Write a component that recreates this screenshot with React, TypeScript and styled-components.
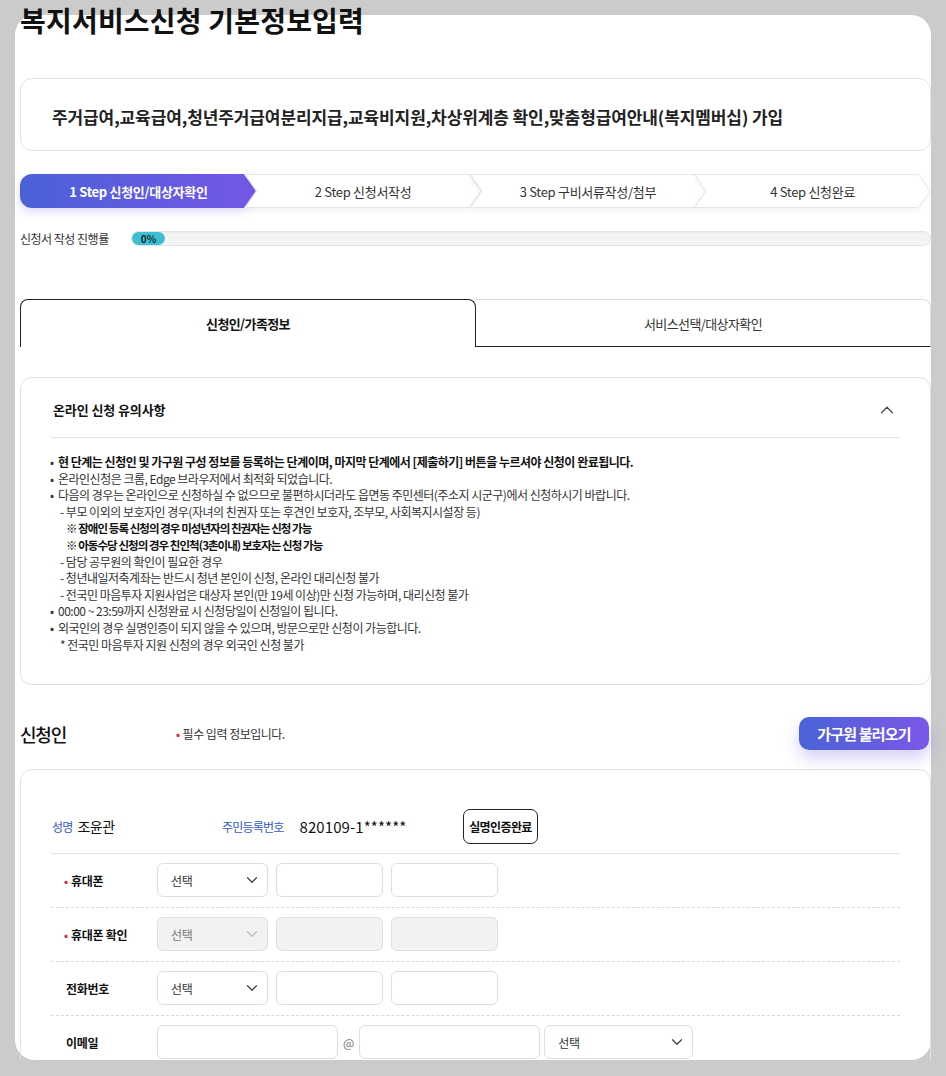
import React from 'react';
import styled, { createGlobalStyle } from 'styled-components';
import { ChevronDown, ChevronUp } from 'lucide-react';

const FONT = `"Noto Sans CJK KR", "Noto Sans", "DejaVu Sans", sans-serif`;

const Global = createGlobalStyle`
  html, body { margin: 0; padding: 0; overflow: hidden; background: #cbcbcb; }
  body { font-family: ${FONT}; color: #222; }
  *, *::before, *::after { box-sizing: border-box; }
  button, input { font-family: ${FONT}; }
`;

const Panel = styled.div`
  display: flow-root;
  margin: 15px 0 0 15px;
  width: 916px;
  height: 1045px;
  background: #fff;
  border-radius: 20px;
`;

const Content = styled.main`
  margin: -15px 0 0 5px;
  width: 911px;
`;

const PageTitle = styled.h1`
  margin: 0;
  font-size: 28px;
  font-weight: 700;
  line-height: 40px;
  letter-spacing: 0.2px;
  color: #111;
`;

const ServiceBox = styled.div`
  margin-top: 38px;
  height: 73px;
  border: 1px solid #e3e3e3;
  border-radius: 12px;
  display: flex;
  align-items: center;
  padding: 3px 0 0 31px;
  font-size: 17px;
  font-weight: 700;
  letter-spacing: -0.1px;
  color: #222;
`;

const Steps = styled.ol`
  margin: 23px 0 0;
  padding: 0 12px 0 0;
  list-style: none;
  display: grid;
  grid-template-columns: repeat(4, 1fr);
  height: 34px;
`;

const Step = styled.li<{ $active?: boolean }>`
  position: relative;
  display: flex;
  align-items: center;
  justify-content: center;
  padding-left: 12px;
  font-size: 13px;
  font-weight: ${(p) => (p.$active ? 700 : 400)};
  color: ${(p) => (p.$active ? '#fff' : '#333')};
  letter-spacing: -0.3px;
`;

const StepShape = styled.svg<{ $active?: boolean }>`
  position: absolute;
  left: 0;
  top: 0;
  width: calc(100% + 12px);
  height: 100%;
  overflow: visible;
  filter: ${(p) =>
    p.$active
      ? 'drop-shadow(0 4px 5px rgba(100, 90, 230, 0.22))'
      : 'drop-shadow(0 2px 3px rgba(0, 0, 0, 0.05))'};
`;

const StepLabel = styled.span`
  position: relative;
`;

const ProgressRow = styled.div`
  margin-top: 23px;
  display: flex;
  align-items: center;
  height: 15px;
`;

const ProgressLabel = styled.span`
  width: 111px;
  font-size: 12px;
  letter-spacing: -0.5px;
  color: #333;
`;

const Track = styled.div`
  flex: 1;
  height: 15px;
  border-radius: 8px;
  background: #f4f4f4;
  border: 1px solid #e4e4e4;
  box-shadow: inset 0 1px 2px rgba(0, 0, 0, 0.04);
  display: flex;
  align-items: center;
`;

const Fill = styled.div`
  height: 13px;
  min-width: 33px;
  background: #3dbfd0;
  border-radius: 8px;
  font-size: 10px;
  font-weight: 700;
  line-height: 13px;
  color: #1b2a30;
  text-align: center;
`;

const Tabs = styled.div`
  margin-top: 53px;
  display: grid;
  grid-template-columns: 456px 1fr;
  height: 48px;
`;

const Tab = styled.button<{ $active?: boolean }>`
  height: 48px;
  background: #fff;
  font-size: 13px;
  letter-spacing: -0.6px;
  cursor: pointer;
  padding: 0;
  font-weight: ${(p) => (p.$active ? 700 : 400)};
  color: ${(p) => (p.$active ? '#111' : '#333')};
  border: 1px solid ${(p) => (p.$active ? '#222' : '#dedede')};
  border-bottom: ${(p) => (p.$active ? 'none' : '1px solid #222')};
  border-left: ${(p) => (p.$active ? '1px solid #222' : 'none')};
  border-radius: ${(p) => (p.$active ? '8px 8px 0 0' : '0 8px 0 0')};
`;

const NoticeCard = styled.section`
  margin-top: 30px;
  border: 1px solid #e0e0e0;
  border-radius: 12px;
  padding: 0 30px 31px;
`;

const NoticeHead = styled.div`
  height: 60px;
  display: flex;
  align-items: center;
  justify-content: space-between;
  padding: 4px 2px 0;
  border-bottom: 1px solid #e3e3e3;
  color: #444;
`;

const NoticeTitle = styled.h3`
  margin: 0;
  font-size: 13px;
  font-weight: 700;
  letter-spacing: -0.1px;
  color: #111;
`;

const NoticeList = styled.ul`
  margin: 0;
  padding: 16px 0 0;
  list-style: none;
`;

type LineKind = 'bullet' | 'dash' | 'note' | 'star';

const NoticeLine = styled.li<{ $kind: LineKind; $strong?: boolean }>`
  position: relative;
  font-size: ${(p) => (p.$kind === 'note' ? '11.5px' : '12px')};
  line-height: 16.6px;
  letter-spacing: ${(p) => (p.$kind === 'note' ? '-0.95px' : '-0.5px')};
  white-space: nowrap;
  font-weight: ${(p) => (p.$strong ? 700 : 400)};
  color: ${(p) => (p.$strong ? '#111' : '#333')};
  padding-left: ${(p) =>
    p.$kind === 'bullet' ? '7px' : p.$kind === 'note' ? '15px' : '9px'};
  &::before {
    content: ${(p) => (p.$kind === 'bullet' ? "'•'" : "''")};
    position: absolute;
    left: -1px;
    top: 0;
    font-weight: 400;
    color: #333;
  }
`;

const SectionHead = styled.div`
  margin-top: 32px;
  display: flex;
  align-items: center;
  height: 33px;
`;

const SectionTitle = styled.h2`
  margin: 0;
  width: 156px;
  font-size: 18px;
  font-weight: 500;
  letter-spacing: -1.2px;
  color: #111;
`;

const RequiredNote = styled.span`
  flex: 1;
  font-size: 12px;
  letter-spacing: -0.5px;
  color: #333;
`;

const Dot = styled.span`
  color: #d3263c;
  margin-right: 3px;
`;

const LabelDot = styled.span`
  position: absolute;
  left: -7px;
  top: 0;
  color: #d3263c;
  font-weight: 400;
`;

const LoadButton = styled.button`
  width: 130px;
  height: 33px;
  margin-right: 2px;
  border: none;
  border-radius: 10px;
  background: linear-gradient(90deg, #4a63d8 0%, #7a58e8 100%);
  box-shadow: 0 8px 16px rgba(100, 90, 230, 0.28);
  color: #fff;
  font-size: 15px;
  font-weight: 700;
  letter-spacing: -0.8px;
  cursor: pointer;
`;

const FormCard = styled.section`
  margin-top: 19px;
  border: 1px solid #e2e2e2;
  border-radius: 12px;
  padding: 39px 30px 60px;
`;

const IdentityRow = styled.div`
  display: flex;
  align-items: center;
  height: 45px;
  padding-bottom: 10px;
  border-bottom: 1px solid #e3e3e3;
`;

const IdentityField = styled.div<{ $width: number }>`
  width: ${(p) => p.$width}px;
  display: flex;
  align-items: center;
  gap: 5px;
  padding-left: 1px;
`;

const BlueLabel = styled.span`
  font-size: 12px;
  letter-spacing: -0.8px;
  color: #2f58c2;
`;

const PlainValue = styled.span<{ $size: number }>`
  font-size: ${(p) => p.$size}px;
  letter-spacing: ${(p) => (p.$size > 14 ? '0.1px' : '-0.5px')};
  color: #111;
  margin-left: ${(p) => (p.$size > 14 ? '11px' : '0')};
`;

const VerifiedButton = styled.button`
  width: 75px;
  height: 35px;
  background: #fff;
  border: 1px solid #222;
  border-radius: 7px;
  font-size: 12px;
  font-weight: 700;
  letter-spacing: -0.6px;
  color: #111;
  padding: 0;
`;

const FieldRow = styled.div`
  display: flex;
  align-items: center;
  padding: 9px 0 10px;
  border-bottom: 1px dashed #d9d9d9;
`;

const FieldLabel = styled.label<{ $required?: boolean }>`
  width: 106px;
  display: flex;
  padding-left: ${(p) => (p.$required ? '20px' : '15px')};
`;

const LabelText = styled.span`
  position: relative;
  font-size: 12px;
  font-weight: 700;
  letter-spacing: -0.3px;
  color: #111;
`;

const Controls = styled.div<{ $gap?: number }>`
  display: flex;
  align-items: center;
  gap: ${(p) => p.$gap ?? 8}px;
`;

const SelectBox = styled.button<{ $width: number; $disabled?: boolean }>`
  width: ${(p) => p.$width}px;
  height: 34px;
  display: flex;
  align-items: center;
  justify-content: space-between;
  padding: 0 6px 0 13px;
  border: 1px solid #dedede;
  border-radius: 6px;
  background: ${(p) => (p.$disabled ? '#f2f2f2' : '#fff')};
  color: ${(p) => (p.$disabled ? '#777' : '#333')};
  font-size: 12px;
  letter-spacing: -0.4px;
  svg {
    color: ${(p) => (p.$disabled ? '#bdbdbd' : '#444')};
  }
`;

const TextInput = styled.input<{ $width: number }>`
  width: ${(p) => p.$width}px;
  height: 34px;
  border: 1px solid #dedede;
  border-radius: 6px;
  background: #fff;
  padding: 0 10px;
  font-size: 12px;
  &:disabled {
    background: #f2f2f2;
  }
`;

const AtSign = styled.span`
  margin: 0 1px;
  font-size: 12px;
  color: #777;
`;

const stepList = [
  '1 Step 신청인/대상자확인',
  '2 Step 신청서작성',
  '3 Step 구비서류작성/첨부',
  '4 Step 신청완료',
];

const noticeLines: { kind: LineKind; strong?: boolean; text: string }[] = [
  {
    kind: 'bullet',
    strong: true,
    text: '현 단계는 신청인 및 가구원 구성 정보를 등록하는 단계이며, 마지막 단계에서 [제출하기] 버튼을 누르셔야 신청이 완료됩니다.',
  },
  { kind: 'bullet', text: '온라인신청은 크롬, Edge 브라우저에서 최적화 되었습니다.' },
  {
    kind: 'bullet',
    text: '다음의 경우는 온라인으로 신청하실 수 없으므로 불편하시더라도 읍면동 주민센터(주소지 시군구)에서 신청하시기 바랍니다.',
  },
  { kind: 'dash', text: '- 부모 이외의 보호자인 경우(자녀의 친권자 또는 후견인 보호자, 조부모, 사회복지시설장 등)' },
  { kind: 'note', strong: true, text: '※ 장애인 등록 신청의 경우 미성년자의 친권자는 신청 가능' },
  { kind: 'note', strong: true, text: '※ 아동수당 신청의 경우 친인척(3촌이내) 보호자는 신청 가능' },
  { kind: 'dash', text: '- 담당 공무원의 확인이 필요한 경우' },
  { kind: 'dash', text: '- 청년내일저축계좌는 반드시 청년 본인이 신청, 온라인 대리신청 불가' },
  { kind: 'dash', text: '- 전국민 마음투자 지원사업은 대상자 본인(만 19세 이상)만 신청 가능하며, 대리신청 불가' },
  { kind: 'bullet', text: '00:00 ~ 23:59까지 신청완료 시 신청당일이 신청일이 됩니다.' },
  { kind: 'bullet', text: '외국인의 경우 실명인증이 되지 않을 수 있으며, 방문으로만 신청이 가능합니다.' },
  { kind: 'star', text: '* 전국민 마음투자 지원 신청의 경우 외국인 신청 불가' },
];

function Select({ width, disabled }: { width: number; disabled?: boolean }) {
  return (
    <SelectBox type="button" $width={width} $disabled={disabled}>
      <span>선택</span>
      <ChevronDown size={18} strokeWidth={1.7} />
    </SelectBox>
  );
}

function Label({ text, required }: { text: string; required?: boolean }) {
  return (
    <FieldLabel $required={required}>
      <LabelText>
        {required && <LabelDot>•</LabelDot>}
        {text}
      </LabelText>
    </FieldLabel>
  );
}

function StepItem({ label, index }: { label: string; index: number }) {
  const active = index === 0;
  return (
    <Step $active={active}>
      <StepShape $active={active} viewBox="0 0 237 34" preserveAspectRatio="none">
        {active ? (
          <>
            <defs>
              <linearGradient id="stepGrad" x1="0" y1="0" x2="1" y2="0">
                <stop offset="0" stopColor="#4b61d8" />
                <stop offset="1" stopColor="#7457e6" />
              </linearGradient>
            </defs>
            <path
              d="M12 0 H224 L236 17 L224 34 H12 A12 12 0 0 1 0 22 V12 A12 12 0 0 1 12 0 Z"
              fill="url(#stepGrad)"
            />
          </>
        ) : (
          <path
            d="M0.5 0.5 H224.5 L236.3 17 L224.5 33.5 H0.5 L12 17 Z"
            fill="#fff"
            stroke="#e6e6e6"
            strokeWidth={1}
            vectorEffect="non-scaling-stroke"
          />
        )}
      </StepShape>
      <StepLabel>{label}</StepLabel>
    </Step>
  );
}

export default function App() {
  return (
    <>
      <Global />
      <Panel>
        <Content>
          <PageTitle>복지서비스신청 기본정보입력</PageTitle>

          <ServiceBox>
            주거급여,교육급여,청년주거급여분리지급,교육비지원,차상위계층 확인,맞춤형급여안내(복지멤버십) 가입
          </ServiceBox>

          <Steps>
            {stepList.map((s, i) => (
              <StepItem key={s} label={s} index={i} />
            ))}
          </Steps>

          <ProgressRow>
            <ProgressLabel>신청서 작성 진행률</ProgressLabel>
            <Track>
              <Fill>0%</Fill>
            </Track>
          </ProgressRow>

          <Tabs>
            <Tab $active type="button">신청인/가족정보</Tab>
            <Tab type="button">서비스선택/대상자확인</Tab>
          </Tabs>

          <NoticeCard>
            <NoticeHead>
              <NoticeTitle>온라인 신청 유의사항</NoticeTitle>
              <ChevronUp size={22} strokeWidth={1.3} />
            </NoticeHead>
            <NoticeList>
              {noticeLines.map((l, i) => (
                <NoticeLine key={i} $kind={l.kind} $strong={l.strong}>
                  {l.text}
                </NoticeLine>
              ))}
            </NoticeList>
          </NoticeCard>

          <SectionHead>
            <SectionTitle>신청인</SectionTitle>
            <RequiredNote>
              <Dot>•</Dot>필수 입력 정보입니다.
            </RequiredNote>
            <LoadButton type="button">가구원 불러오기</LoadButton>
          </SectionHead>

          <FormCard>
            <IdentityRow>
              <IdentityField $width={170}>
                <BlueLabel>성명</BlueLabel>
                <PlainValue $size={14}>조윤관</PlainValue>
              </IdentityField>
              <IdentityField $width={242}>
                <BlueLabel>주민등록번호</BlueLabel>
                <PlainValue $size={15}>820109-1******</PlainValue>
              </IdentityField>
              <VerifiedButton type="button">실명인증완료</VerifiedButton>
            </IdentityRow>

            <FieldRow>
              <Label text="휴대폰" required />
              <Controls>
                <Select width={111} />
                <TextInput $width={107} />
                <TextInput $width={107} />
              </Controls>
            </FieldRow>

            <FieldRow>
              <Label text="휴대폰 확인" required />
              <Controls>
                <Select width={111} disabled />
                <TextInput $width={107} disabled />
                <TextInput $width={107} disabled />
              </Controls>
            </FieldRow>

            <FieldRow>
              <Label text="전화번호" />
              <Controls>
                <Select width={111} />
                <TextInput $width={107} />
                <TextInput $width={107} />
              </Controls>
            </FieldRow>

            <FieldRow>
              <Label text="이메일" />
              <Controls $gap={4}>
                <TextInput $width={181} />
                <AtSign>@</AtSign>
                <TextInput $width={181} />
                <Select width={149} />
              </Controls>
            </FieldRow>
          </FormCard>
        </Content>
      </Panel>
    </>
  );
}
